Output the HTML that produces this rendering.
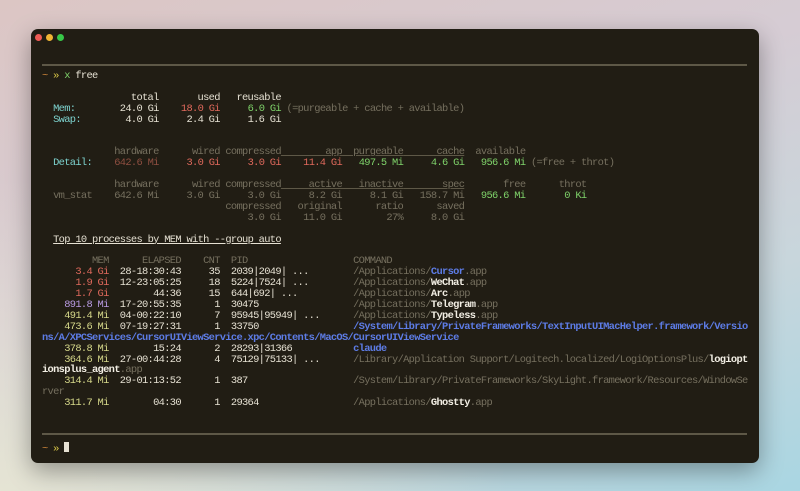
<!DOCTYPE html>
<html><head><meta charset="utf-8"><style>
html,body{margin:0;padding:0;width:800px;height:491px;overflow:hidden}
body{background:linear-gradient(160deg,#dcc6c4 0%,#d6ccd4 40%,#c8d6dc 70%,#a9d6e2 100%);position:relative}
.bg2{position:absolute;inset:0;background:radial-gradient(ellipse at 0% 100%,rgba(236,232,210,.8),rgba(236,232,210,0) 45%)}
.win{position:absolute;left:31px;top:29px;width:728px;height:434px;background:#211d14;border-radius:7px;box-shadow:0 8px 24px rgba(0,0,0,.35)}
.dot{position:absolute;top:5px;width:7px;height:7px;border-radius:50%}
.sep{position:absolute;left:11px;width:705px;height:2px;background:#5e5847}
pre{position:absolute;left:11px;top:42px;margin:0;font-family:"Liberation Mono",monospace;font-size:10.4px;letter-spacing:-0.68px;line-height:10.9px;color:#e6e1d3;white-space:pre}
.g{color:#76705f}.r{color:#e0695c}.dr{color:#8e4e40}.gr{color:#7fd36a}.y{color:#d6d88a}.p{color:#b99be3}.c{color:#7dd3cf}.b{color:#5d7ce6;font-weight:bold}.o{color:#d58a3c}.yl{color:#e2cf4a}
.u{text-decoration:underline;text-decoration-color:#5e5847}
.w{font-weight:bold;color:#f2eee4}
.cur{display:inline-block;width:5px;height:10px;background:#e6e1d3;vertical-align:-1px}
</style></head><body><div class="bg2"></div>
<div class="win">
<div class="dot" style="left:4px;background:#ee5b55"></div>
<div class="dot" style="left:15px;background:#f0b534"></div>
<div class="dot" style="left:26px;background:#37c748"></div>
<div class="sep" style="top:35px"></div>
<div class="sep" style="top:404px"></div>
<pre><span class="o">~</span> <span class="yl">»</span> <span class="gr">x</span> free

                total       used   reusable
  <span class="c">Mem:</span>        24.0 Gi<span class="r">    18.0 Gi</span><span class="gr">     6.0 Gi</span><span class="g"> (=purgeable + cache + available)</span>
  <span class="c">Swap:</span>        4.0 Gi     2.4 Gi     1.6 Gi


<span class="g">             hardware      wired compressed<span class="u">        app</span><span class="u">  purgeable</span><span class="u">      cache</span>  available</span>
  <span class="c">Detail:</span>    <span class="dr">642.6 Mi</span><span class="r">     3.0 Gi     3.0 Gi    11.4 Gi</span><span class="gr">   497.5 Mi     4.6 Gi   956.6 Mi</span><span class="g"> (=free + throt)</span>

<span class="g">             hardware      wired compressed<span class="u">     active</span><span class="u">   inactive</span><span class="u">       spec</span>       free      throt</span>
<span class="g">  vm_stat    642.6 Mi     3.0 Gi     3.0 Gi     8.2 Gi     8.1 Gi   158.7 Mi</span><span class="gr">   956.6 Mi       0 Ki</span>
<span class="g">                                 compressed   original      ratio      saved</span>
<span class="g">                                     3.0 Gi    11.0 Gi        27%     8.0 Gi</span>

  <span class="u" style="text-decoration-color:#e6e1d3">Top 10 processes by MEM with --group auto</span>

<span class="g">         MEM      ELAPSED    CNT  PID                   COMMAND</span>
<span class="r">      3.4 Gi</span>  28-18:30:43     35  2039|2049| ...        <span class="g">/Applications/</span><span class="b">Cursor</span><span class="g">.app</span>
<span class="r">      1.9 Gi</span>  12-23:05:25     18  5224|7524| ...        <span class="g">/Applications/</span><span class="w">WeChat</span><span class="g">.app</span>
<span class="r">      1.7 Gi</span>        44:36     15  644|692| ...          <span class="g">/Applications/</span><span class="w">Arc</span><span class="g">.app</span>
<span class="p">    891.8 Mi</span>  17-20:55:35      1  30475                 <span class="g">/Applications/</span><span class="w">Telegram</span><span class="g">.app</span>
<span class="y">    491.4 Mi</span>  04-00:22:10      7  95945|95949| ...      <span class="g">/Applications/</span><span class="w">Typeless</span><span class="g">.app</span>
<span class="y">    473.6 Mi</span>  07-19:27:31      1  33750                 <span class="b">/System/Library/PrivateFrameworks/TextInputUIMacHelper.framework/Versio</span>
<span class="b">ns/A/XPCServices/CursorUIViewService.xpc/Contents/MacOS/CursorUIViewService</span>
<span class="y">    378.8 Mi</span>        15:24      2  28293|31366           <span class="b">claude</span>
<span class="y">    364.6 Mi</span>  27-00:44:28      4  75129|75133| ...      <span class="g">/Library/Application Support/Logitech.localized/LogiOptionsPlus/</span><span class="w">logiopt</span>
<span class="w">ionsplus_agent</span><span class="g">.app</span>
<span class="y">    314.4 Mi</span>  29-01:13:52      1  387                   <span class="g">/System/Library/PrivateFrameworks/SkyLight.framework/Resources/WindowSe</span>
<span class="g">rver</span>
<span class="y">    311.7 Mi</span>        04:30      1  29364                 <span class="g">/Applications/</span><span class="w">Ghostty</span><span class="g">.app</span>



<span class="o">~</span> <span class="yl">»</span> <span class="cur"></span></pre>
</div>
</body></html>
